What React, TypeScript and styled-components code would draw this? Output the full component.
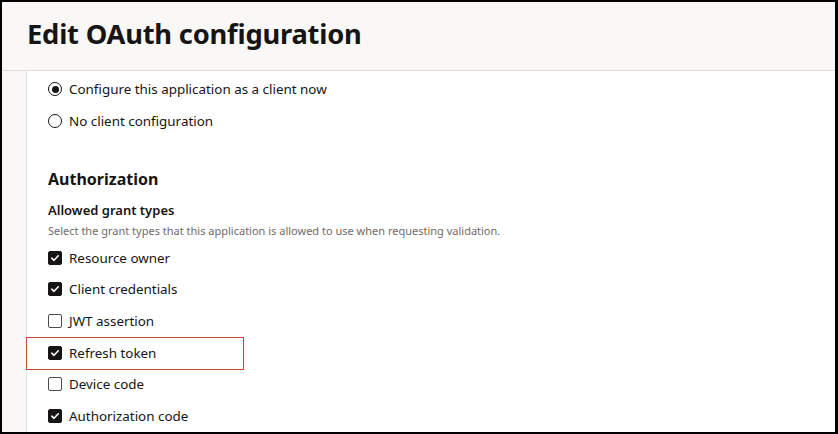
import styled, { createGlobalStyle } from "styled-components";

const GlobalStyle = createGlobalStyle`
    html, body {
        margin: 0;
        padding: 0;
        background: #ffffff;
    }
    body {
        font-family: "Noto Sans", "Open Sans", sans-serif;
        color: #161513;
    }
`;

const Frame = styled.div`
    box-sizing: border-box;
    width: 838px;
    height: 434px;
    border: 2px solid #000;
    border-right-width: 3px;
    overflow: hidden;
    display: flex;
    flex-direction: column;
    background: #fff;
`;

const Header = styled.header`
    box-sizing: border-box;
    flex: 0 0 69px;
    display: flex;
    align-items: center;
    padding: 0 0 6px 25px;
    background: #f9f8f6;
    border-bottom: 1px solid #dedcda;
`;

const Title = styled.h1`
    margin: 0;
    font-size: 27.3px;
    font-weight: 700;
    letter-spacing: -0.2px;
    color: #161513;
`;

const Body = styled.div`
    flex: 1;
    display: flex;
    min-height: 0;
`;

const Gutter = styled.div`
    flex: 0 0 24px;
    background: #f9f8f6;
    border-right: 1px solid #e2e0de;
`;

const Content = styled.main`
    flex: 1;
    padding: 2px 0 0 21px;
`;

const Row = styled.label<{ $highlight?: boolean }>`
    position: relative;
    display: flex;
    align-items: center;
    gap: 7px;
    height: ${(p) => (p.$highlight ? "31.6px" : "31.6px")};
    font-size: 13.4px;
    color: #161513;

    ${(p) =>
        p.$highlight &&
        `
        &::after {
            content: "";
            position: absolute;
            left: -22px;
            top: 0;
            width: 216px;
            height: 31px;
            border: 1px solid #c74634;
        }
    `}
`;

const RadioRow = styled(Row)`
    height: 32px;
`;

const Radio = styled.span<{ $checked?: boolean }>`
    box-sizing: border-box;
    width: 14px;
    height: 14px;
    border-radius: 50%;
    border: 1.3px solid #161513;
    display: flex;
    align-items: center;
    justify-content: center;

    &::before {
        content: "";
        display: ${(p) => (p.$checked ? "block" : "none")};
        width: 7px;
        height: 7px;
        border-radius: 50%;
        background: #161513;
    }
`;

const Box = styled.span<{ $checked?: boolean }>`
    box-sizing: border-box;
    width: 14px;
    height: 14px;
    border-radius: 2px;
    border: 1px solid ${(p) => (p.$checked ? "#161513" : "#4f4c49")};
    background: ${(p) => (p.$checked ? "#161513" : "#fff")};
    display: flex;
    align-items: center;
    justify-content: center;
`;

const Section = styled.h2`
    margin: 32px 0 0;
    font-size: 16px;
    line-height: 20px;
    font-weight: 700;
`;

const FieldLabel = styled.h3`
    margin: 11px 0 0;
    font-size: 13px;
    line-height: 20px;
    font-weight: 600;
`;

const Hint = styled.p`
    margin: 3px 0 0;
    font-size: 11px;
    line-height: 16px;
    color: #6f6c68;
`;

const List = styled.div`
    margin-top: 3px;
`;

const Check = () => (
    <svg width="10" height="10" viewBox="0 0 10 10">
        <path d="M1.8 5.2 L4 7.3 L8.3 2.8" fill="none" stroke="#fff" strokeWidth="1.6" strokeLinecap="round" strokeLinejoin="round" />
    </svg>
);

const grants = [
    { label: "Resource owner", checked: true },
    { label: "Client credentials", checked: true },
    { label: "JWT assertion", checked: false },
    { label: "Refresh token", checked: true, highlight: true },
    { label: "Device code", checked: false },
    { label: "Authorization code", checked: true },
];

const App = () => {
    return (
        <>
            <GlobalStyle />
            <Frame>
                <Header>
                    <Title>Edit OAuth configuration</Title>
                </Header>
                <Body>
                    <Gutter />
                    <Content>
                        <RadioRow>
                            <Radio $checked />
                            <span>Configure this application as a client now</span>
                        </RadioRow>
                        <RadioRow>
                            <Radio />
                            <span>No client configuration</span>
                        </RadioRow>

                        <Section>Authorization</Section>
                        <FieldLabel>Allowed grant types</FieldLabel>
                        <Hint>Select the grant types that this application is allowed to use when requesting validation.</Hint>

                        <List>
                            {grants.map((g) => (
                                <Row key={g.label} $highlight={g.highlight}>
                                    <Box $checked={g.checked}>{g.checked && <Check />}</Box>
                                    <span>{g.label}</span>
                                </Row>
                            ))}
                        </List>
                    </Content>
                </Body>
            </Frame>
        </>
    );
};

export default App;
